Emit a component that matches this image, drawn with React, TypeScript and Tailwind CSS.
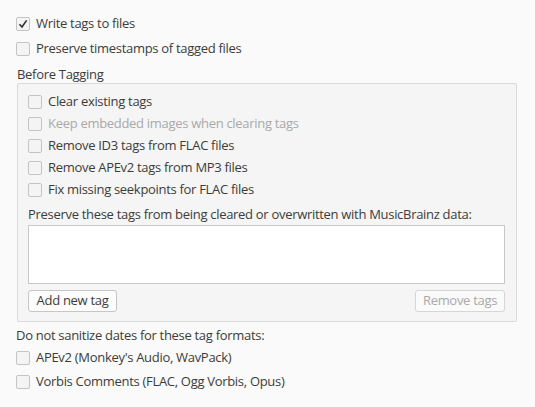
const Check = ({ checked = false }: { checked?: boolean }) => (
  <span className="flex h-[14px] w-[14px] shrink-0 items-center justify-center rounded-[2px] border border-[#c4c4c4] bg-[#f4f4f4]">
    {checked && (
      <svg width="10" height="10" viewBox="0 0 10 10">
        <path d="M1.5 5.2 L4 8 L8.6 1.4" fill="none" stroke="#2e2e2e" strokeWidth="1.6" />
      </svg>
    )}
  </span>
);

const Row = ({
  label,
  checked = false,
  disabled = false,
}: {
  label: string;
  checked?: boolean;
  disabled?: boolean;
}) => (
  <div className="flex h-[22px] items-center gap-[6px]">
    <Check checked={checked} />
    <span className={disabled ? "text-[#a9a9a9]" : "text-[#3c3c3c]"}>{label}</span>
  </div>
);

export default function App() {
  return (
    <div
      className="h-[407px] w-[535px] bg-[#fafafa] pl-[16px] pt-[13px] text-[13px] tracking-[-0.3px] text-[#3c3c3c]"
      style={{ fontFamily: '"Open Sans", "Noto Sans", sans-serif' }}
    >
      <Row label="Write tags to files" checked />
      <div className="mt-[3px]">
        <Row label="Preserve timestamps of tagged files" />
      </div>

      {/* Before Tagging */}
      <div className="mt-[5px] h-[18px] pl-[1px] leading-[18px]">Before Tagging</div>
      <div className="ml-[1px] w-[500px] rounded-[2px] border border-[#dadada] bg-[#f5f5f5] pb-[9px] pl-[10px] pr-[11px] pt-[7px]">
        <Row label="Clear existing tags" />
        <Row label="Keep embedded images when clearing tags" disabled />
        <Row label="Remove ID3 tags from FLAC files" />
        <Row label="Remove APEv2 tags from MP3 files" />
        <Row label="Fix missing seekpoints for FLAC files" />

        <div className="mt-[4px] h-[18px] leading-[18px]">
          Preserve these tags from being cleared or overwritten with MusicBrainz data:
        </div>
        <div className="mt-[2px] h-[59px] border border-[#c8c8c8] bg-white" />

        <div className="mt-[6px] flex justify-between">
          <button className="h-[22px] w-[89px] rounded-[3px] border border-[#c6c6c6] bg-[#fcfcfc] text-[#3c3c3c]">
            Add new tag
          </button>
          <button className="h-[22px] w-[90px] rounded-[3px] border border-[#d6d6d6] bg-[#fafafa] text-[#a9a9a9]">
            Remove tags
          </button>
        </div>
      </div>

      <div className="mt-[4px] h-[18px] leading-[18px]">Do not sanitize dates for these tag formats:</div>
      <div className="mt-[3px]">
        <Row label="APEv2 (Monkey's Audio, WavPack)" />
      </div>
      <div className="mt-[2px]">
        <Row label="Vorbis Comments (FLAC, Ogg Vorbis, Opus)" />
      </div>
    </div>
  );
}
